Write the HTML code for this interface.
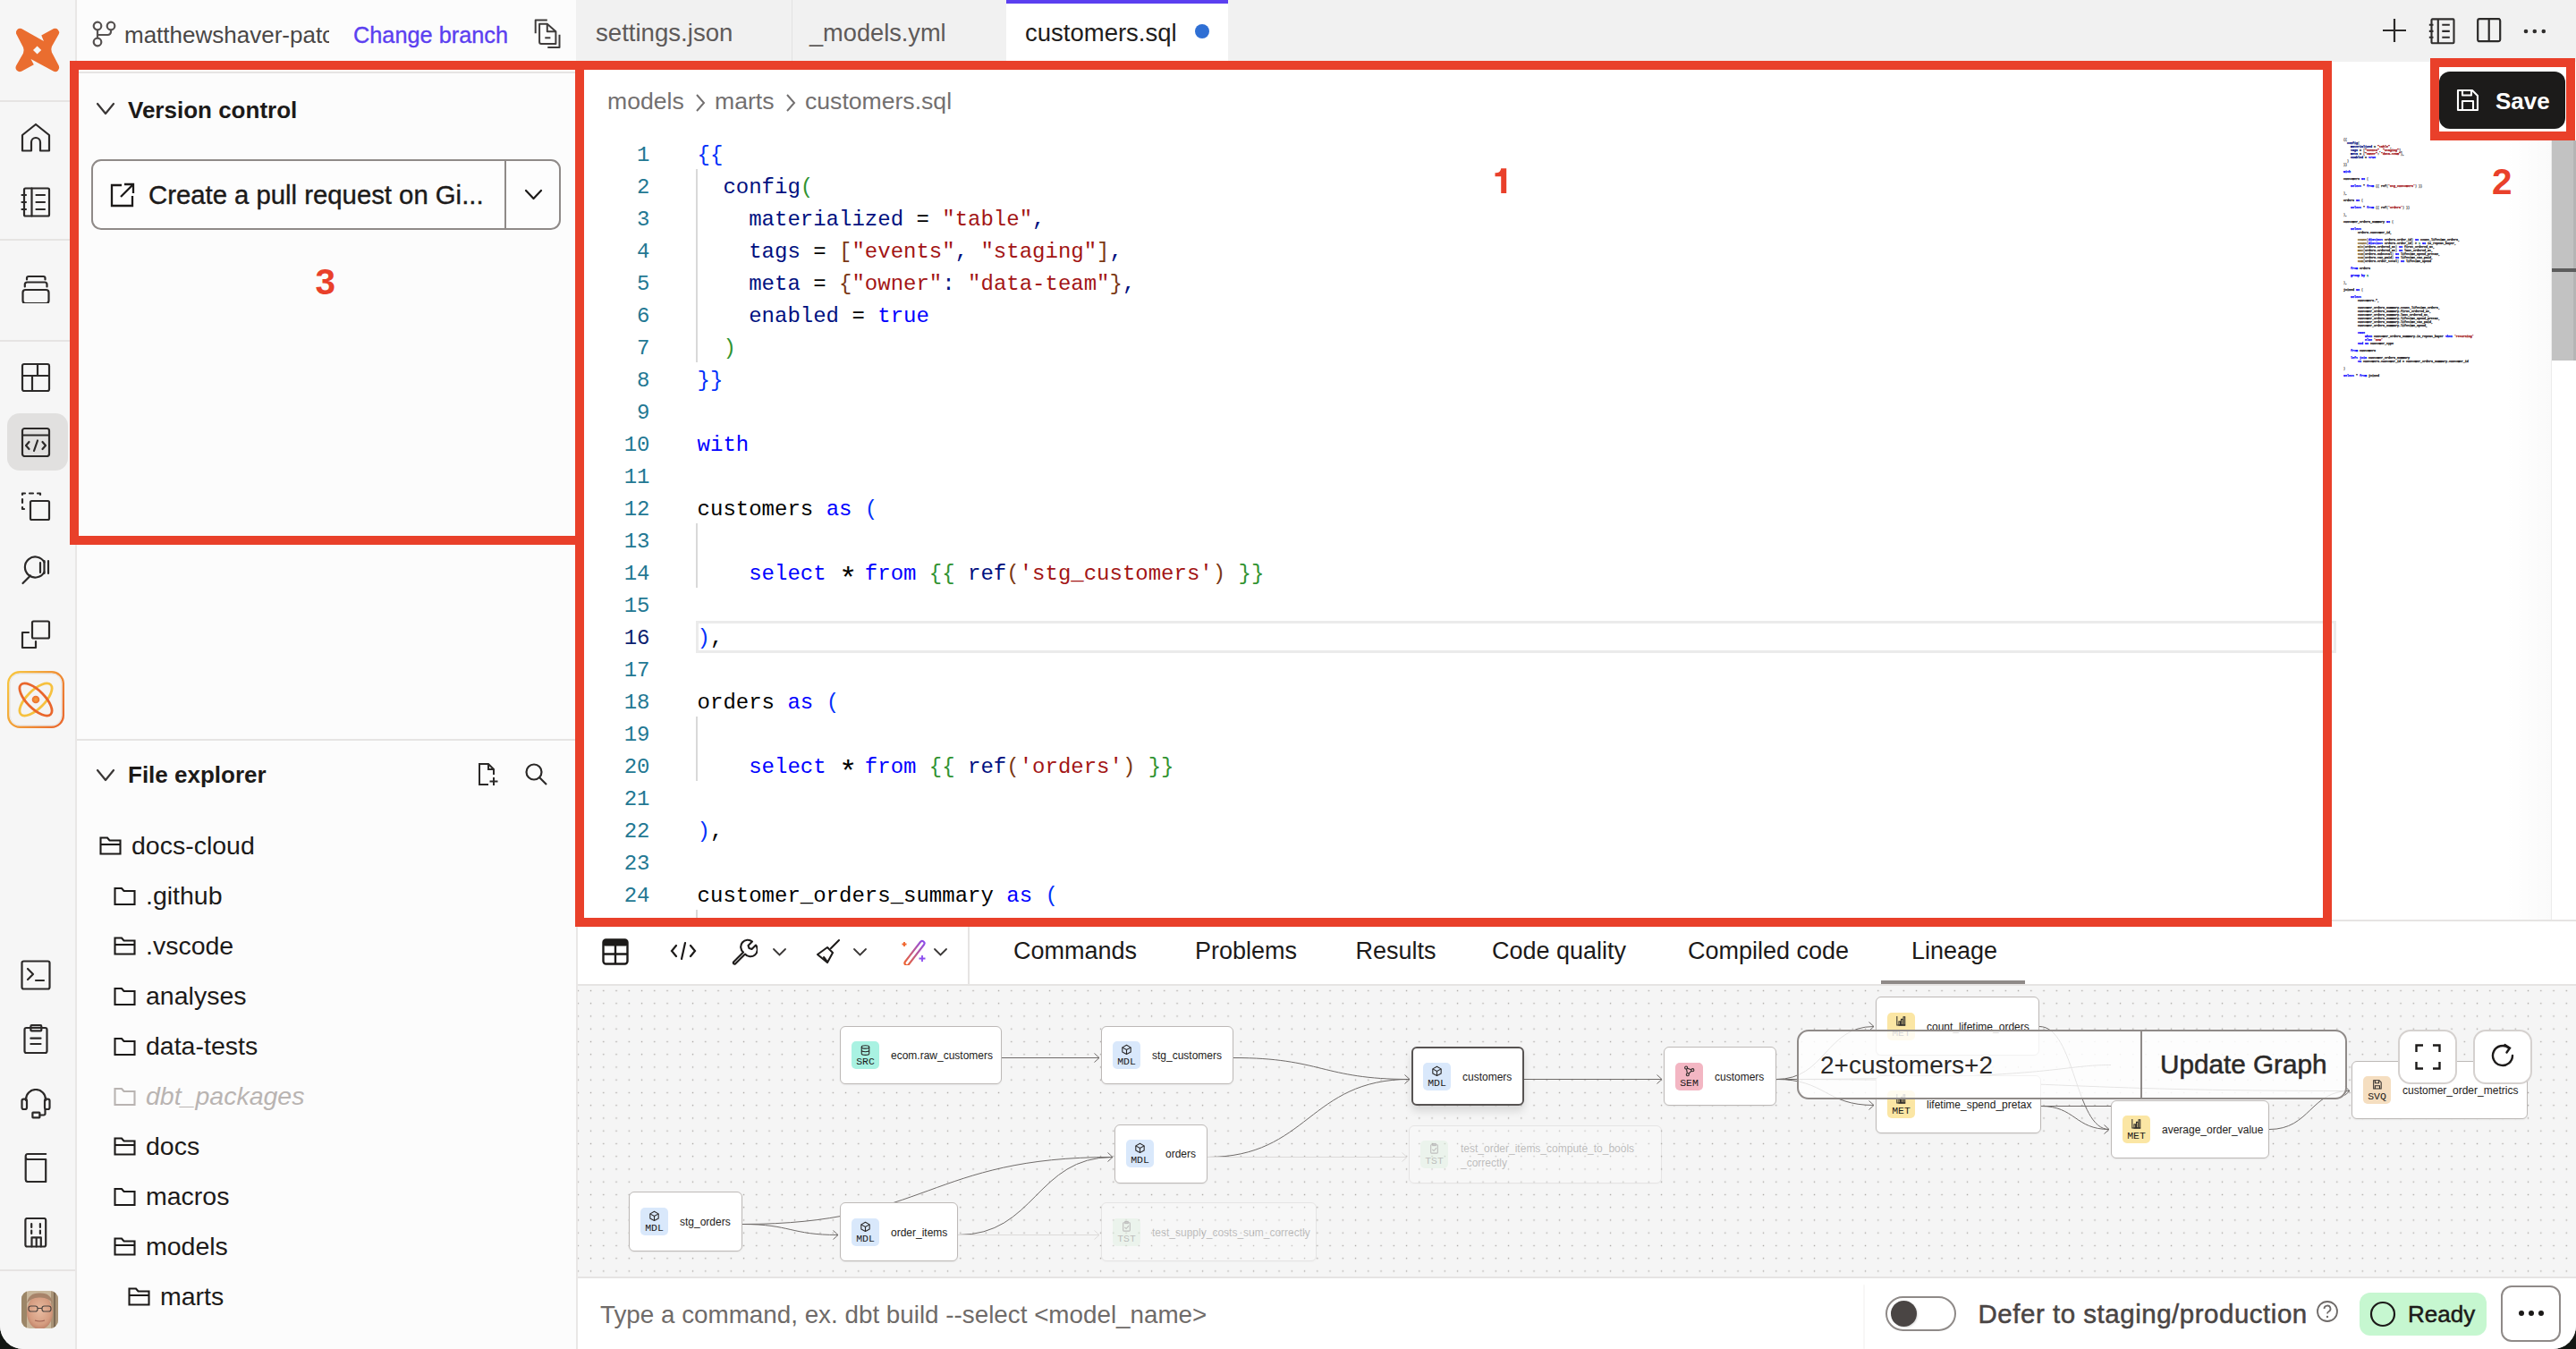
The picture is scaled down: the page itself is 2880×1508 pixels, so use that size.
<!DOCTYPE html>
<html><head><meta charset="utf-8"><title>dbt Studio</title>
<style>
html,body{margin:0;padding:0;}
body{width:2880px;height:1508px;overflow:hidden;background:#121612;font-family:'Liberation Sans', sans-serif;}
#app{position:absolute;left:0;top:0;width:2880px;height:1508px;background:#fcfcfc;border-radius:0 0 26px 26px;overflow:hidden;}
.t{position:absolute;white-space:pre;line-height:normal;}
.r{position:absolute;box-sizing:border-box;}
.ic{fill:none;stroke:#2b2928;stroke-width:2.2;stroke-linecap:round;stroke-linejoin:round;}
</style></head><body><div id="app">

<div class="r" style="left:0px;top:0px;width:85px;height:1508px;background:#f6f6f6;"></div>
<div class="r" style="left:84px;top:0px;width:2px;height:1508px;background:#e9e7e6;"></div>
<div class="r" style="left:0px;top:112px;width:84px;height:2px;background:#e6e4e3;"></div>
<div class="r" style="left:0px;top:267px;width:84px;height:2px;background:#e6e4e3;"></div>
<div class="r" style="left:0px;top:380px;width:84px;height:2px;background:#e6e4e3;"></div>
<div class="r" style="left:0px;top:1419px;width:84px;height:2px;background:#e6e4e3;"></div>
<svg class="r" style="left:0px;top:0px;" width="86" height="100" viewBox="0 0 86 100"><path fill="#ea6d2f" fill-rule="evenodd" d="M24 32 L48.9 46 L46.3 39.6 L60 32 A4.6 4.6 0 0 1 65.8 38 L57.9 52 Q56.6 55.3 57.9 58.6 L65.8 73.6 A4.6 4.6 0 0 1 60 79.8 L34.5 66 L37.8 72.3 L24 79.8 A4.6 4.6 0 0 1 18 73.6 L26 59.5 Q27.3 56.2 26 52.9 L18 37.4 A4.6 4.6 0 0 1 24 32 Z M41.6 51.4 L46.2 56 L41.6 60.6 L37 56 Z"/></svg>
<svg class="r" style="left:23px;top:137px;" width="34" height="34" viewBox="0 0 34 34"><g class="ic"><path d="M2 14 L17 2 L32 14 V31.5 H22 V22 a5 5 0 0 0 -10 0 V31.5 H2 Z"/></g></svg>
<svg class="r" style="left:23px;top:209px;" width="34" height="34" viewBox="0 0 34 34"><g class="ic"><rect x="4" y="1.5" width="28" height="31" rx="1.5"/><path d="M12.5 1.5V32.5M1.5 9H6M1.5 17H6M1.5 25H6M17.5 9H27M17.5 17H27M17.5 25H27"/></g></svg>
<svg class="r" style="left:23px;top:305px;" width="34" height="34" viewBox="0 0 34 34"><g class="ic"><rect x="2.5" y="19" width="29" height="15" rx="3"/><path d="M4.8 15.5 V13 a2.5 2.5 0 0 1 2.5-2.5 H27 a2.5 2.5 0 0 1 2.5 2.5 V15.5M7 7.5 V6 a2 2 0 0 1 2-2 H25.5 a2 2 0 0 1 2 2 V7.5"/></g></svg>
<svg class="r" style="left:23px;top:405px;" width="34" height="34" viewBox="0 0 34 34"><g class="ic"><rect x="2" y="2" width="30" height="30" rx="2"/><path d="M2 15H32M19 2V15M13 15V32"/></g></svg>
<div class="r" style="left:8px;top:462px;width:68px;height:64px;background:#e1e0df;border-radius:14px;"></div>
<svg class="r" style="left:23px;top:477px;" width="34" height="34" viewBox="0 0 34 34"><g class="ic"><rect x="2" y="2" width="30" height="31" rx="2.5"/><path d="M2 9.5H32M9.5 17L6 21L9.5 25M24.5 17L28 21L24.5 25M19 15.5L15 27"/></g></svg>
<svg class="r" style="left:23px;top:549px;" width="34" height="34" viewBox="0 0 34 34"><g class="ic"><rect x="11" y="11" width="21" height="21" rx="1.5"/><path d="M2 4 V2.5 H5M10 2.5H14M19 2.5H22 V4M2 9V13M2 18V20H4" /></g></svg>
<svg class="r" style="left:22px;top:619px;" width="38" height="38" viewBox="0 0 38 38"><g class="ic"><path d="M27.5 9.5 A11.5 11.5 0 1 0 27.5 20.5"/><path d="M12 24.5L3.5 33M23 10V21M27.5 8V22M32 8V22"/></g></svg>
<svg class="r" style="left:23px;top:693px;" width="34" height="34" viewBox="0 0 34 34"><g class="ic"><rect x="13" y="1.5" width="19" height="19" rx="1.5"/><path d="M9 14H2V31H17V24"/></g></svg>
<svg class="r" style="left:8px;top:750px;" width="64" height="64" viewBox="0 0 64 64"><defs><linearGradient id="ag" x1="0" y1="0.2" x2="1" y2="0.8"><stop offset="0" stop-color="#f7c23f"/><stop offset="1" stop-color="#ea6d2f"/></linearGradient><radialGradient id="dg"><stop offset="0" stop-color="#f7a23a"/><stop offset="1" stop-color="#ea6d2f"/></radialGradient></defs><rect x="1.2" y="1.2" width="61.6" height="61.6" rx="13" fill="#f4f4f4" stroke="url(#ag)" stroke-width="2.4"/><rect x="3.2" y="3.2" width="57.6" height="57.6" rx="11" fill="none" stroke="#e6e4e3" stroke-width="1"/><ellipse cx="32" cy="32" rx="10" ry="23.5" transform="rotate(45 32 32)" fill="none" stroke="#f6c13f" stroke-width="2.8"/><ellipse cx="32" cy="32" rx="10" ry="23.5" transform="rotate(-45 32 32)" fill="none" stroke="#e9662c" stroke-width="2.8"/><circle cx="32" cy="32" r="4.3" fill="url(#dg)"/></svg>
<svg class="r" style="left:23px;top:1073px;" width="34" height="34" viewBox="0 0 34 34"><g class="ic"><rect x="1.5" y="1.5" width="31" height="31" rx="2"/><path d="M8 10L14 16L8 22M17 23H26"/></g></svg>
<svg class="r" style="left:23px;top:1145px;" width="34" height="34" viewBox="0 0 34 34"><g class="ic"><rect x="4.5" y="4" width="25" height="28" rx="2"/><rect x="11.4" y="1.2" width="11.9" height="6.2" rx="1"/><path d="M11.4 15.7H22.5M11.4 22H22.5"/></g></svg>
<svg class="r" style="left:23px;top:1217px;" width="34" height="34" viewBox="0 0 34 34"><g class="ic"><path d="M6 13 V12 a11 11 0 0 1 22 0 V13"/><rect x="1.5" y="11.6" width="5.5" height="11.4" rx="2"/><rect x="27" y="11.6" width="5.5" height="11.4" rx="2"/><rect x="13.4" y="26.7" width="8" height="5.6" rx="0.5"/><path d="M21.4 29.5H26a1.5 1.5 0 0 0 1.5-1.5V23"/></g></svg>
<svg class="r" style="left:23px;top:1288px;" width="34" height="34" viewBox="0 0 34 34"><g class="ic"><path d="M28.2 2 H8 Q5.7 2 5.7 4.5 V30.5 Q5.7 33 8 33 H28.2 V8 H8 Q5.7 8 5.7 5.5"/></g></svg>
<svg class="r" style="left:23px;top:1361px;" width="34" height="34" viewBox="0 0 34 34"><g class="ic"><rect x="5.4" y="1" width="22.8" height="31.5" rx="2"/><path d="M12.2 7V11M21.9 7V11M12.2 14.6V18M21.9 14.6V18M12.5 32.5V22.3H22.8V32.5M17.7 22.3V32.5"/></g></svg>
<svg class="r" style="left:24px;top:1443px;" width="41" height="42" viewBox="0 0 41 42"><defs><clipPath id="avc"><rect x="0" y="0" width="41" height="42" rx="9"/></clipPath><radialGradient id="fg" cx="0.5" cy="0.45" r="0.6"><stop offset="0" stop-color="#e8bba0"/><stop offset="0.7" stop-color="#d59c80"/><stop offset="1" stop-color="#b77a62"/></radialGradient></defs><g clip-path="url(#avc)"><rect width="41" height="42" fill="#c9b79c"/><rect x="0" y="0" width="6" height="42" fill="#9c8668"/><rect x="33" y="0" width="8" height="42" fill="#a89276"/><rect x="36" y="0" width="2" height="42" fill="#7d6a55"/><ellipse cx="20.5" cy="24" rx="14.5" ry="19" fill="url(#fg)"/><path d="M6 14 Q8 2 20.5 2.5 Q33 2 35 14 Q30 7 20.5 7.5 Q11 7 6 14Z" fill="#a7836a"/><rect x="8" y="17" width="10" height="6" rx="2.5" fill="none" stroke="#4d4540" stroke-width="1.2"/><rect x="23" y="17" width="10" height="6" rx="2.5" fill="none" stroke="#4d4540" stroke-width="1.2"/><path d="M18 19.5H23" stroke="#4d4540" stroke-width="1"/><path d="M15 33 Q20.5 35 26 33" fill="none" stroke="#9c5f50" stroke-width="1.2"/></g></svg>
<div class="r" style="left:86px;top:0px;width:558px;height:69px;background:#fcfcfc;"></div>
<div class="r" style="left:644px;top:0px;width:2236px;height:69px;background:#f1f1f1;"></div>
<svg class="r" style="left:103px;top:23px;" width="28" height="30" viewBox="0 0 28 30"><g fill="none" stroke="#555150" stroke-width="2.2"><circle cx="6" cy="6" r="4.3"/><circle cx="21" cy="6" r="4.3"/><circle cx="6" cy="24" r="4.3"/><path d="M6 10.3V19.7M21 10.3V12.5a3.5 3.5 0 0 1 -3.5 3.5H6"/></g></svg>
<div class="r" style="left:139px;top:0;width:229px;height:69px;overflow:hidden;">
<div class="t " style="left:0px;top:24px;font-size:26px;color:#4a4746;font-weight:normal;font-family:'Liberation Sans', sans-serif;">matthewshaver-patch-12</div>
</div>
<div class="t " style="left:395px;top:25px;font-size:25.3px;color:#5b3ff0;font-weight:normal;font-family:'Liberation Sans', sans-serif;-webkit-text-stroke:0.35px #5b3ff0;">Change branch</div>
<svg class="r" style="left:596px;top:20px;" width="34" height="36" viewBox="0 0 34 36"><g fill="none" stroke="#3f3c3b" stroke-width="2" stroke-linejoin="round"><path d="M2.7 17.3V2.6H15.8"/><path d="M7.1 6.7H15.8L25.4 15.3V28.9H9.1a2 2 0 0 1-2-2Z"/><path d="M15.8 6.7V15.3H25.4"/><path d="M13.3 22.3H19.4"/><path d="M29.5 18.8V32.9H16.3"/></g></svg>
<div class="r" style="left:885px;top:0px;width:1px;height:69px;background:#e2e2e2;"></div>
<div class="r" style="left:1125px;top:0px;width:248px;height:69px;background:#ffffff;"></div>
<div class="r" style="left:1125px;top:0px;width:248px;height:4px;background:#5b3ff0;"></div>
<div class="t " style="left:666px;top:21px;font-size:27.6px;color:#5e5a59;font-weight:normal;font-family:'Liberation Sans', sans-serif;">settings.json</div>
<div class="t " style="left:905px;top:21px;font-size:27.2px;color:#5e5a59;font-weight:normal;font-family:'Liberation Sans', sans-serif;">_models.yml</div>
<div class="t " style="left:1146px;top:21px;font-size:27.5px;color:#1f1d1c;font-weight:normal;font-family:'Liberation Sans', sans-serif;">customers.sql</div>
<div class="r" style="left:1336px;top:27px;width:16px;height:16px;border-radius:50%;background:#2f6fd4;"></div>
<svg class="r" style="left:2663px;top:20px;" width="28" height="28" viewBox="0 0 28 28"><path d="M14 1V27M1 14H27" stroke="#2b2928" stroke-width="2.2"/></svg>
<svg class="r" style="left:2714px;top:20px;" width="32" height="30" viewBox="0 0 32 30"><g fill="none" stroke="#2f2d2c" stroke-width="2.1"><rect x="4.5" y="1.4" width="25" height="26.9" rx="1"/><path d="M11.8 1.4V28.3M1.8 7.8H6.5M1.8 14.9H6.5M1.8 21.8H6.5M16.3 7.8H24.8M16.3 14.9H24.8M16.3 21.8H24.8"/></g></svg>
<svg class="r" style="left:2769px;top:20px;" width="30" height="28" viewBox="0 0 30 28"><g fill="none" stroke="#2b2928" stroke-width="2.2"><rect x="1.2" y="1.2" width="25" height="25" rx="2"/><path d="M13.7 1.2V26.2"/></g></svg>
<svg class="r" style="left:2819px;top:30px;" width="30" height="10" viewBox="0 0 30 10"><g fill="#2f2d2c"><circle cx="5" cy="5" r="2.3"/><circle cx="14.8" cy="5" r="2.3"/><circle cx="24.8" cy="5" r="2.3"/></g></svg>
<div class="r" style="left:86px;top:69px;width:559px;height:1439px;background:#fcfcfc;"></div>
<div class="r" style="left:644px;top:69px;width:2px;height:1439px;background:#e9e7e6;"></div>
<div class="r" style="left:86px;top:80px;width:558px;height:2px;background:#e6e4e3;"></div>
<svg class="r" style="left:107px;top:114px;" width="22" height="15" viewBox="0 0 22 15"><path d="M2 2 L11.0 13 L20 2" fill="none" stroke="#3a3736" stroke-width="2.2" stroke-linecap="round" stroke-linejoin="round"/></svg>
<div class="t " style="left:143px;top:108px;font-size:26px;color:#1c1a19;font-weight:bold;font-family:'Liberation Sans', sans-serif;">Version control</div>
<div class="r" style="left:102px;top:178px;width:525px;height:79px;border:2px solid #8f8a88;border-radius:11px;background:#fdfdfd;"></div>
<div class="r" style="left:564px;top:179px;width:2px;height:77px;background:#8f8a88;"></div>
<svg class="r" style="left:122px;top:203px;" width="30" height="30" viewBox="0 0 30 30"><g fill="none" stroke="#1c1a19" stroke-width="2.3"><path d="M14 4H3V27H26V16"/><path d="M17 3H27V13M27 3L13 17"/></g></svg>
<div class="t " style="left:166px;top:201px;font-size:29.3px;color:#1c1a19;font-weight:normal;font-family:'Liberation Sans', sans-serif;-webkit-text-stroke:0.4px #1c1a19;">Create a pull request on Gi...</div>
<svg class="r" style="left:586px;top:211px;" width="21" height="13" viewBox="0 0 21 13"><path d="M2 2 L10.5 11 L19 2" fill="none" stroke="#1c1a19" stroke-width="2.2" stroke-linecap="round" stroke-linejoin="round"/></svg>
<div class="r" style="left:86px;top:826px;width:558px;height:2px;background:#e6e4e3;"></div>
<svg class="r" style="left:107px;top:859px;" width="22" height="15" viewBox="0 0 22 15"><path d="M2 2 L11.0 13 L20 2" fill="none" stroke="#3a3736" stroke-width="2.2" stroke-linecap="round" stroke-linejoin="round"/></svg>
<div class="t " style="left:143px;top:851px;font-size:26px;color:#1c1a19;font-weight:bold;font-family:'Liberation Sans', sans-serif;">File explorer</div>
<svg class="r" style="left:533px;top:852px;" width="26" height="28" viewBox="0 0 26 28"><g fill="none" stroke="#2b2928" stroke-width="2"><path d="M13 25H3V2H13L19 8V14"/><path d="M13 2V8H19"/><path d="M19 17V26M14.5 21.5H23.5"/></g></svg>
<svg class="r" style="left:586px;top:852px;" width="28" height="28" viewBox="0 0 28 28"><g fill="none" stroke="#2b2928" stroke-width="2.2"><circle cx="11" cy="11" r="8.5"/><path d="M17 17L25 25"/></g></svg>
<svg class="r" style="left:111px;top:934px;" width="25" height="23" viewBox="0 0 25 23"><g fill="none" stroke="#1c1a19" stroke-width="2.1" stroke-linejoin="miter"><path d="M1.5 2.5H9L11.5 5.5H23.5V20.5H1.5Z"/><path d="M1.5 10H23.5"/></g></svg>
<div class="t " style="left:147px;top:929px;font-size:28.5px;color:#1c1a19;font-weight:normal;font-family:'Liberation Sans', sans-serif;">docs-cloud</div>
<svg class="r" style="left:127px;top:990px;" width="25" height="23" viewBox="0 0 25 23"><g fill="none" stroke="#1c1a19" stroke-width="2.1" stroke-linejoin="miter"><path d="M1.5 3H9L11.5 6H23.5V21H1.5Z"/></g></svg>
<div class="t " style="left:163px;top:985px;font-size:28.5px;color:#1c1a19;font-weight:normal;font-family:'Liberation Sans', sans-serif;">.github</div>
<svg class="r" style="left:127px;top:1046px;" width="25" height="23" viewBox="0 0 25 23"><g fill="none" stroke="#1c1a19" stroke-width="2.1" stroke-linejoin="miter"><path d="M1.5 2.5H9L11.5 5.5H23.5V20.5H1.5Z"/><path d="M1.5 10H23.5"/></g></svg>
<div class="t " style="left:163px;top:1041px;font-size:28.5px;color:#1c1a19;font-weight:normal;font-family:'Liberation Sans', sans-serif;">.vscode</div>
<svg class="r" style="left:127px;top:1102px;" width="25" height="23" viewBox="0 0 25 23"><g fill="none" stroke="#1c1a19" stroke-width="2.1" stroke-linejoin="miter"><path d="M1.5 3H9L11.5 6H23.5V21H1.5Z"/></g></svg>
<div class="t " style="left:163px;top:1097px;font-size:28.5px;color:#1c1a19;font-weight:normal;font-family:'Liberation Sans', sans-serif;">analyses</div>
<svg class="r" style="left:127px;top:1158px;" width="25" height="23" viewBox="0 0 25 23"><g fill="none" stroke="#1c1a19" stroke-width="2.1" stroke-linejoin="miter"><path d="M1.5 3H9L11.5 6H23.5V21H1.5Z"/></g></svg>
<div class="t " style="left:163px;top:1153px;font-size:28.5px;color:#1c1a19;font-weight:normal;font-family:'Liberation Sans', sans-serif;">data-tests</div>
<svg class="r" style="left:127px;top:1214px;" width="25" height="23" viewBox="0 0 25 23"><g fill="none" stroke="#b9b4b2" stroke-width="2.1" stroke-linejoin="miter"><path d="M1.5 3H9L11.5 6H23.5V21H1.5Z"/></g></svg>
<div class="t " style="left:163px;top:1209px;font-size:28.5px;color:#b9b4b2;font-weight:normal;font-family:'Liberation Sans', sans-serif;font-style:italic;">dbt_packages</div>
<svg class="r" style="left:127px;top:1270px;" width="25" height="23" viewBox="0 0 25 23"><g fill="none" stroke="#1c1a19" stroke-width="2.1" stroke-linejoin="miter"><path d="M1.5 2.5H9L11.5 5.5H23.5V20.5H1.5Z"/><path d="M1.5 10H23.5"/></g></svg>
<div class="t " style="left:163px;top:1265px;font-size:28.5px;color:#1c1a19;font-weight:normal;font-family:'Liberation Sans', sans-serif;">docs</div>
<svg class="r" style="left:127px;top:1326px;" width="25" height="23" viewBox="0 0 25 23"><g fill="none" stroke="#1c1a19" stroke-width="2.1" stroke-linejoin="miter"><path d="M1.5 3H9L11.5 6H23.5V21H1.5Z"/></g></svg>
<div class="t " style="left:163px;top:1321px;font-size:28.5px;color:#1c1a19;font-weight:normal;font-family:'Liberation Sans', sans-serif;">macros</div>
<svg class="r" style="left:127px;top:1382px;" width="25" height="23" viewBox="0 0 25 23"><g fill="none" stroke="#1c1a19" stroke-width="2.1" stroke-linejoin="miter"><path d="M1.5 2.5H9L11.5 5.5H23.5V20.5H1.5Z"/><path d="M1.5 10H23.5"/></g></svg>
<div class="t " style="left:163px;top:1377px;font-size:28.5px;color:#1c1a19;font-weight:normal;font-family:'Liberation Sans', sans-serif;">models</div>
<svg class="r" style="left:143px;top:1438px;" width="25" height="23" viewBox="0 0 25 23"><g fill="none" stroke="#1c1a19" stroke-width="2.1" stroke-linejoin="miter"><path d="M1.5 2.5H9L11.5 5.5H23.5V20.5H1.5Z"/><path d="M1.5 10H23.5"/></g></svg>
<div class="t " style="left:179px;top:1433px;font-size:28.5px;color:#1c1a19;font-weight:normal;font-family:'Liberation Sans', sans-serif;">marts</div>
<div class="r" style="left:646px;top:69px;width:2234px;height:959px;background:#ffffff;"></div>
<div class="r" style="left:646px;top:1028px;width:2234px;height:2px;background:#e6e4e3;"></div>
<div class="t " style="left:679px;top:98px;font-size:26.6px;color:#737070;font-weight:normal;font-family:'Liberation Sans', sans-serif;">models</div>
<svg class="r" style="left:776px;top:104px;" width="14" height="22" viewBox="0 0 14 22"><path d="M3 2L11 11L3 20" fill="none" stroke="#737070" stroke-width="2"/></svg>
<div class="t " style="left:799px;top:98px;font-size:26.6px;color:#737070;font-weight:normal;font-family:'Liberation Sans', sans-serif;">marts</div>
<svg class="r" style="left:877px;top:104px;" width="14" height="22" viewBox="0 0 14 22"><path d="M3 2L11 11L3 20" fill="none" stroke="#737070" stroke-width="2"/></svg>
<div class="t " style="left:900px;top:98px;font-size:26.6px;color:#737070;font-weight:normal;font-family:'Liberation Sans', sans-serif;">customers.sql</div>
<div class="t " style="left:712.1px;top:160px;font-size:24px;color:#237893;font-weight:normal;font-family:'Liberation Mono', monospace;">1</div>
<div class="t " style="left:779.6px;top:160px;font-size:24px;color:#000;font-weight:normal;font-family:'Liberation Mono', monospace;"><span style="color:#0431fa">{{</span></div>
<div class="t " style="left:712.1px;top:196px;font-size:24px;color:#237893;font-weight:normal;font-family:'Liberation Mono', monospace;">2</div>
<div class="t " style="left:779.6px;top:196px;font-size:24px;color:#000;font-weight:normal;font-family:'Liberation Mono', monospace;"><span style="color:#001080">  config</span><span style="color:#319331">(</span></div>
<div class="t " style="left:712.1px;top:232px;font-size:24px;color:#237893;font-weight:normal;font-family:'Liberation Mono', monospace;">3</div>
<div class="t " style="left:779.6px;top:232px;font-size:24px;color:#000;font-weight:normal;font-family:'Liberation Mono', monospace;"><span style="color:#001080">    materialized</span><span style="color:#000000"> = </span><span style="color:#a31515">"table"</span><span style="color:#001080">,</span></div>
<div class="t " style="left:712.1px;top:268px;font-size:24px;color:#237893;font-weight:normal;font-family:'Liberation Mono', monospace;">4</div>
<div class="t " style="left:779.6px;top:268px;font-size:24px;color:#000;font-weight:normal;font-family:'Liberation Mono', monospace;"><span style="color:#001080">    tags</span><span style="color:#000000"> = </span><span style="color:#7b3814">[</span><span style="color:#a31515">"events"</span><span style="color:#001080">, </span><span style="color:#a31515">"staging"</span><span style="color:#7b3814">]</span><span style="color:#001080">,</span></div>
<div class="t " style="left:712.1px;top:304px;font-size:24px;color:#237893;font-weight:normal;font-family:'Liberation Mono', monospace;">5</div>
<div class="t " style="left:779.6px;top:304px;font-size:24px;color:#000;font-weight:normal;font-family:'Liberation Mono', monospace;"><span style="color:#001080">    meta</span><span style="color:#000000"> = </span><span style="color:#7b3814">{</span><span style="color:#a31515">"owner"</span><span style="color:#001080">: </span><span style="color:#a31515">"data-team"</span><span style="color:#7b3814">}</span><span style="color:#001080">,</span></div>
<div class="t " style="left:712.1px;top:340px;font-size:24px;color:#237893;font-weight:normal;font-family:'Liberation Mono', monospace;">6</div>
<div class="t " style="left:779.6px;top:340px;font-size:24px;color:#000;font-weight:normal;font-family:'Liberation Mono', monospace;"><span style="color:#001080">    enabled</span><span style="color:#000000"> = </span><span style="color:#0000ff">true</span></div>
<div class="t " style="left:712.1px;top:376px;font-size:24px;color:#237893;font-weight:normal;font-family:'Liberation Mono', monospace;">7</div>
<div class="t " style="left:779.6px;top:376px;font-size:24px;color:#000;font-weight:normal;font-family:'Liberation Mono', monospace;"><span style="color:#319331">  )</span></div>
<div class="t " style="left:712.1px;top:412px;font-size:24px;color:#237893;font-weight:normal;font-family:'Liberation Mono', monospace;">8</div>
<div class="t " style="left:779.6px;top:412px;font-size:24px;color:#000;font-weight:normal;font-family:'Liberation Mono', monospace;"><span style="color:#0431fa">}}</span></div>
<div class="t " style="left:712.1px;top:448px;font-size:24px;color:#237893;font-weight:normal;font-family:'Liberation Mono', monospace;">9</div>
<div class="t " style="left:697.7px;top:484px;font-size:24px;color:#237893;font-weight:normal;font-family:'Liberation Mono', monospace;">10</div>
<div class="t " style="left:779.6px;top:484px;font-size:24px;color:#000;font-weight:normal;font-family:'Liberation Mono', monospace;"><span style="color:#0000ff">with</span></div>
<div class="t " style="left:697.7px;top:520px;font-size:24px;color:#237893;font-weight:normal;font-family:'Liberation Mono', monospace;">11</div>
<div class="t " style="left:697.7px;top:556px;font-size:24px;color:#237893;font-weight:normal;font-family:'Liberation Mono', monospace;">12</div>
<div class="t " style="left:779.6px;top:556px;font-size:24px;color:#000;font-weight:normal;font-family:'Liberation Mono', monospace;"><span style="color:#000000">customers </span><span style="color:#0000ff">as</span><span style="color:#000000"> </span><span style="color:#0431fa">(</span></div>
<div class="t " style="left:697.7px;top:592px;font-size:24px;color:#237893;font-weight:normal;font-family:'Liberation Mono', monospace;">13</div>
<div class="t " style="left:697.7px;top:628px;font-size:24px;color:#237893;font-weight:normal;font-family:'Liberation Mono', monospace;">14</div>
<div class="t " style="left:779.6px;top:628px;font-size:24px;color:#000;font-weight:normal;font-family:'Liberation Mono', monospace;"><span style="color:#000000">    </span><span style="color:#0000ff">select</span><span style="color:#000000"> <span style="display:inline-block;width:14.4px;text-align:center;font-size:34px;line-height:10px;position:relative;top:9px">*</span> </span><span style="color:#0000ff">from</span><span style="color:#000000"> </span><span style="color:#319331">{{</span><span style="color:#000000"> </span><span style="color:#001080">ref</span><span style="color:#7b3814">(</span><span style="color:#a31515">'stg_customers'</span><span style="color:#7b3814">)</span><span style="color:#000000"> </span><span style="color:#319331">}}</span></div>
<div class="t " style="left:697.7px;top:664px;font-size:24px;color:#237893;font-weight:normal;font-family:'Liberation Mono', monospace;">15</div>
<div class="t " style="left:697.7px;top:700px;font-size:24px;color:#0b216f;font-weight:normal;font-family:'Liberation Mono', monospace;">16</div>
<div class="t " style="left:779.6px;top:700px;font-size:24px;color:#000;font-weight:normal;font-family:'Liberation Mono', monospace;"><span style="color:#0431fa">)</span><span style="color:#000000">,</span></div>
<div class="t " style="left:697.7px;top:736px;font-size:24px;color:#237893;font-weight:normal;font-family:'Liberation Mono', monospace;">17</div>
<div class="t " style="left:697.7px;top:772px;font-size:24px;color:#237893;font-weight:normal;font-family:'Liberation Mono', monospace;">18</div>
<div class="t " style="left:779.6px;top:772px;font-size:24px;color:#000;font-weight:normal;font-family:'Liberation Mono', monospace;"><span style="color:#000000">orders </span><span style="color:#0000ff">as</span><span style="color:#000000"> </span><span style="color:#0431fa">(</span></div>
<div class="t " style="left:697.7px;top:808px;font-size:24px;color:#237893;font-weight:normal;font-family:'Liberation Mono', monospace;">19</div>
<div class="t " style="left:697.7px;top:844px;font-size:24px;color:#237893;font-weight:normal;font-family:'Liberation Mono', monospace;">20</div>
<div class="t " style="left:779.6px;top:844px;font-size:24px;color:#000;font-weight:normal;font-family:'Liberation Mono', monospace;"><span style="color:#000000">    </span><span style="color:#0000ff">select</span><span style="color:#000000"> <span style="display:inline-block;width:14.4px;text-align:center;font-size:34px;line-height:10px;position:relative;top:9px">*</span> </span><span style="color:#0000ff">from</span><span style="color:#000000"> </span><span style="color:#319331">{{</span><span style="color:#000000"> </span><span style="color:#001080">ref</span><span style="color:#7b3814">(</span><span style="color:#a31515">'orders'</span><span style="color:#7b3814">)</span><span style="color:#000000"> </span><span style="color:#319331">}}</span></div>
<div class="t " style="left:697.7px;top:880px;font-size:24px;color:#237893;font-weight:normal;font-family:'Liberation Mono', monospace;">21</div>
<div class="t " style="left:697.7px;top:916px;font-size:24px;color:#237893;font-weight:normal;font-family:'Liberation Mono', monospace;">22</div>
<div class="t " style="left:779.6px;top:916px;font-size:24px;color:#000;font-weight:normal;font-family:'Liberation Mono', monospace;"><span style="color:#0431fa">)</span><span style="color:#000000">,</span></div>
<div class="t " style="left:697.7px;top:952px;font-size:24px;color:#237893;font-weight:normal;font-family:'Liberation Mono', monospace;">23</div>
<div class="t " style="left:697.7px;top:988px;font-size:24px;color:#237893;font-weight:normal;font-family:'Liberation Mono', monospace;">24</div>
<div class="t " style="left:779.6px;top:988px;font-size:24px;color:#000;font-weight:normal;font-family:'Liberation Mono', monospace;"><span style="color:#000000">customer_orders_summary </span><span style="color:#0000ff">as</span><span style="color:#000000"> </span><span style="color:#0431fa">(</span></div>
<div class="r" style="left:778px;top:694px;width:1834px;height:36px;border:3px solid #ebebeb;"></div>
<div class="r" style="left:778px;top:189px;width:2px;height:216px;background:#d9d9d9;"></div>
<div class="r" style="left:778px;top:585px;width:2px;height:72px;background:#d9d9d9;"></div>
<div class="r" style="left:778px;top:801px;width:2px;height:72px;background:#d9d9d9;"></div>
<div class="r" style="left:778px;top:1017px;width:2px;height:36px;background:#d9d9d9;"></div>
<div class="r" style="left:2620px;top:154px;font-family:'Liberation Mono', monospace;font-size:3.34px;line-height:4px;white-space:pre;font-weight:bold;-webkit-text-stroke:0.25px currentColor"><span style="color:#6a6a6a">{</span><span style="color:#6a6a6a">{</span><br><span style="color:#1a1a1a">  </span><span style="color:#001080">config</span><span style="color:#6a6a6a">(</span><br><span style="color:#1a1a1a">    </span><span style="color:#001080">materialized</span><span style="color:#1a1a1a"> </span><span style="color:#1a1a1a">=</span><span style="color:#1a1a1a"> </span><span style="color:#a31515">"table"</span><span style="color:#1a1a1a">,</span><br><span style="color:#1a1a1a">    </span><span style="color:#001080">tags</span><span style="color:#1a1a1a"> </span><span style="color:#1a1a1a">=</span><span style="color:#1a1a1a"> </span><span style="color:#6a6a6a">[</span><span style="color:#a31515">"events"</span><span style="color:#1a1a1a">,</span><span style="color:#1a1a1a"> </span><span style="color:#a31515">"staging"</span><span style="color:#6a6a6a">]</span><span style="color:#1a1a1a">,</span><br><span style="color:#1a1a1a">    </span><span style="color:#001080">meta</span><span style="color:#1a1a1a"> </span><span style="color:#1a1a1a">=</span><span style="color:#1a1a1a"> </span><span style="color:#6a6a6a">{</span><span style="color:#a31515">"owner"</span><span style="color:#1a1a1a">:</span><span style="color:#1a1a1a"> </span><span style="color:#a31515">"data-team"</span><span style="color:#6a6a6a">}</span><span style="color:#1a1a1a">,</span><br><span style="color:#1a1a1a">    </span><span style="color:#001080">enabled</span><span style="color:#1a1a1a"> </span><span style="color:#1a1a1a">=</span><span style="color:#1a1a1a"> </span><span style="color:#0000ff">true</span><br><span style="color:#1a1a1a">  </span><span style="color:#6a6a6a">)</span><br><span style="color:#6a6a6a">}</span><span style="color:#6a6a6a">}</span><br><br><span style="color:#0000ff">with</span><br><br><span style="color:#1a1a1a">customers</span><span style="color:#1a1a1a"> </span><span style="color:#0000ff">as</span><span style="color:#1a1a1a"> </span><span style="color:#6a6a6a">(</span><br><br><span style="color:#1a1a1a">    </span><span style="color:#0000ff">select</span><span style="color:#1a1a1a"> </span><span style="color:#1a1a1a">*</span><span style="color:#1a1a1a"> </span><span style="color:#0000ff">from</span><span style="color:#1a1a1a"> </span><span style="color:#6a6a6a">{</span><span style="color:#6a6a6a">{</span><span style="color:#1a1a1a"> </span><span style="color:#1a1a1a">ref</span><span style="color:#6a6a6a">(</span><span style="color:#a31515">'stg_customers'</span><span style="color:#6a6a6a">)</span><span style="color:#1a1a1a"> </span><span style="color:#6a6a6a">}</span><span style="color:#6a6a6a">}</span><br><br><span style="color:#6a6a6a">)</span><span style="color:#1a1a1a">,</span><br><br><span style="color:#1a1a1a">orders</span><span style="color:#1a1a1a"> </span><span style="color:#0000ff">as</span><span style="color:#1a1a1a"> </span><span style="color:#6a6a6a">(</span><br><br><span style="color:#1a1a1a">    </span><span style="color:#0000ff">select</span><span style="color:#1a1a1a"> </span><span style="color:#1a1a1a">*</span><span style="color:#1a1a1a"> </span><span style="color:#0000ff">from</span><span style="color:#1a1a1a"> </span><span style="color:#6a6a6a">{</span><span style="color:#6a6a6a">{</span><span style="color:#1a1a1a"> </span><span style="color:#1a1a1a">ref</span><span style="color:#6a6a6a">(</span><span style="color:#a31515">'orders'</span><span style="color:#6a6a6a">)</span><span style="color:#1a1a1a"> </span><span style="color:#6a6a6a">}</span><span style="color:#6a6a6a">}</span><br><br><span style="color:#6a6a6a">)</span><span style="color:#1a1a1a">,</span><br><br><span style="color:#1a1a1a">customer_orders_summary</span><span style="color:#1a1a1a"> </span><span style="color:#0000ff">as</span><span style="color:#1a1a1a"> </span><span style="color:#6a6a6a">(</span><br><br><span style="color:#1a1a1a">    </span><span style="color:#0000ff">select</span><br><span style="color:#1a1a1a">        </span><span style="color:#1a1a1a">orders</span><span style="color:#1a1a1a">.</span><span style="color:#1a1a1a">customer_id</span><span style="color:#1a1a1a">,</span><br><br><span style="color:#1a1a1a">        </span><span style="color:#795e26">count</span><span style="color:#6a6a6a">(</span><span style="color:#0000ff">distinct</span><span style="color:#1a1a1a"> </span><span style="color:#1a1a1a">orders</span><span style="color:#1a1a1a">.</span><span style="color:#1a1a1a">order_id</span><span style="color:#6a6a6a">)</span><span style="color:#1a1a1a"> </span><span style="color:#0000ff">as</span><span style="color:#1a1a1a"> </span><span style="color:#1a1a1a">count_lifetime_orders</span><span style="color:#1a1a1a">,</span><br><span style="color:#1a1a1a">        </span><span style="color:#795e26">count</span><span style="color:#6a6a6a">(</span><span style="color:#0000ff">distinct</span><span style="color:#1a1a1a"> </span><span style="color:#1a1a1a">orders</span><span style="color:#1a1a1a">.</span><span style="color:#1a1a1a">order_id</span><span style="color:#6a6a6a">)</span><span style="color:#1a1a1a"> </span><span style="color:#1a1a1a">&gt;</span><span style="color:#1a1a1a"> </span><span style="color:#098658">1</span><span style="color:#1a1a1a"> </span><span style="color:#0000ff">as</span><span style="color:#1a1a1a"> </span><span style="color:#1a1a1a">is_repeat_buyer</span><span style="color:#1a1a1a">,</span><br><span style="color:#1a1a1a">        </span><span style="color:#795e26">min</span><span style="color:#6a6a6a">(</span><span style="color:#1a1a1a">orders</span><span style="color:#1a1a1a">.</span><span style="color:#1a1a1a">ordered_at</span><span style="color:#6a6a6a">)</span><span style="color:#1a1a1a"> </span><span style="color:#0000ff">as</span><span style="color:#1a1a1a"> </span><span style="color:#1a1a1a">first_ordered_at</span><span style="color:#1a1a1a">,</span><br><span style="color:#1a1a1a">        </span><span style="color:#795e26">max</span><span style="color:#6a6a6a">(</span><span style="color:#1a1a1a">orders</span><span style="color:#1a1a1a">.</span><span style="color:#1a1a1a">ordered_at</span><span style="color:#6a6a6a">)</span><span style="color:#1a1a1a"> </span><span style="color:#0000ff">as</span><span style="color:#1a1a1a"> </span><span style="color:#1a1a1a">last_ordered_at</span><span style="color:#1a1a1a">,</span><br><span style="color:#1a1a1a">        </span><span style="color:#795e26">sum</span><span style="color:#6a6a6a">(</span><span style="color:#1a1a1a">orders</span><span style="color:#1a1a1a">.</span><span style="color:#1a1a1a">subtotal</span><span style="color:#6a6a6a">)</span><span style="color:#1a1a1a"> </span><span style="color:#0000ff">as</span><span style="color:#1a1a1a"> </span><span style="color:#1a1a1a">lifetime_spend_pretax</span><span style="color:#1a1a1a">,</span><br><span style="color:#1a1a1a">        </span><span style="color:#795e26">sum</span><span style="color:#6a6a6a">(</span><span style="color:#1a1a1a">orders</span><span style="color:#1a1a1a">.</span><span style="color:#1a1a1a">tax_paid</span><span style="color:#6a6a6a">)</span><span style="color:#1a1a1a"> </span><span style="color:#0000ff">as</span><span style="color:#1a1a1a"> </span><span style="color:#1a1a1a">lifetime_tax_paid</span><span style="color:#1a1a1a">,</span><br><span style="color:#1a1a1a">        </span><span style="color:#795e26">sum</span><span style="color:#6a6a6a">(</span><span style="color:#1a1a1a">orders</span><span style="color:#1a1a1a">.</span><span style="color:#1a1a1a">order_total</span><span style="color:#6a6a6a">)</span><span style="color:#1a1a1a"> </span><span style="color:#0000ff">as</span><span style="color:#1a1a1a"> </span><span style="color:#1a1a1a">lifetime_spend</span><br><br><span style="color:#1a1a1a">    </span><span style="color:#0000ff">from</span><span style="color:#1a1a1a"> </span><span style="color:#1a1a1a">orders</span><br><br><span style="color:#1a1a1a">    </span><span style="color:#0000ff">group</span><span style="color:#1a1a1a"> </span><span style="color:#0000ff">by</span><span style="color:#1a1a1a"> </span><span style="color:#098658">1</span><br><br><span style="color:#6a6a6a">)</span><span style="color:#1a1a1a">,</span><br><br><span style="color:#1a1a1a">joined</span><span style="color:#1a1a1a"> </span><span style="color:#0000ff">as</span><span style="color:#1a1a1a"> </span><span style="color:#6a6a6a">(</span><br><br><span style="color:#1a1a1a">    </span><span style="color:#0000ff">select</span><br><span style="color:#1a1a1a">        </span><span style="color:#1a1a1a">customers</span><span style="color:#1a1a1a">.</span><span style="color:#1a1a1a">*</span><span style="color:#1a1a1a">,</span><br><br><span style="color:#1a1a1a">        </span><span style="color:#1a1a1a">customer_orders_summary</span><span style="color:#1a1a1a">.</span><span style="color:#1a1a1a">count_lifetime_orders</span><span style="color:#1a1a1a">,</span><br><span style="color:#1a1a1a">        </span><span style="color:#1a1a1a">customer_orders_summary</span><span style="color:#1a1a1a">.</span><span style="color:#1a1a1a">first_ordered_at</span><span style="color:#1a1a1a">,</span><br><span style="color:#1a1a1a">        </span><span style="color:#1a1a1a">customer_orders_summary</span><span style="color:#1a1a1a">.</span><span style="color:#1a1a1a">last_ordered_at</span><span style="color:#1a1a1a">,</span><br><span style="color:#1a1a1a">        </span><span style="color:#1a1a1a">customer_orders_summary</span><span style="color:#1a1a1a">.</span><span style="color:#1a1a1a">lifetime_spend_pretax</span><span style="color:#1a1a1a">,</span><br><span style="color:#1a1a1a">        </span><span style="color:#1a1a1a">customer_orders_summary</span><span style="color:#1a1a1a">.</span><span style="color:#1a1a1a">lifetime_tax_paid</span><span style="color:#1a1a1a">,</span><br><span style="color:#1a1a1a">        </span><span style="color:#1a1a1a">customer_orders_summary</span><span style="color:#1a1a1a">.</span><span style="color:#1a1a1a">lifetime_spend</span><span style="color:#1a1a1a">,</span><br><br><span style="color:#1a1a1a">        </span><span style="color:#0000ff">case</span><br><span style="color:#1a1a1a">            </span><span style="color:#0000ff">when</span><span style="color:#1a1a1a"> </span><span style="color:#1a1a1a">customer_orders_summary</span><span style="color:#1a1a1a">.</span><span style="color:#1a1a1a">is_repeat_buyer</span><span style="color:#1a1a1a"> </span><span style="color:#0000ff">then</span><span style="color:#1a1a1a"> </span><span style="color:#a31515">'returning'</span><br><span style="color:#1a1a1a">            </span><span style="color:#0000ff">else</span><span style="color:#1a1a1a"> </span><span style="color:#a31515">'new'</span><br><span style="color:#1a1a1a">        </span><span style="color:#0000ff">end</span><span style="color:#1a1a1a"> </span><span style="color:#0000ff">as</span><span style="color:#1a1a1a"> </span><span style="color:#1a1a1a">customer_type</span><br><br><span style="color:#1a1a1a">    </span><span style="color:#0000ff">from</span><span style="color:#1a1a1a"> </span><span style="color:#1a1a1a">customers</span><br><br><span style="color:#1a1a1a">    </span><span style="color:#0000ff">left</span><span style="color:#1a1a1a"> </span><span style="color:#0000ff">join</span><span style="color:#1a1a1a"> </span><span style="color:#1a1a1a">customer_orders_summary</span><br><span style="color:#1a1a1a">        </span><span style="color:#0000ff">on</span><span style="color:#1a1a1a"> </span><span style="color:#1a1a1a">customers</span><span style="color:#1a1a1a">.</span><span style="color:#1a1a1a">customer_id</span><span style="color:#1a1a1a"> </span><span style="color:#1a1a1a">=</span><span style="color:#1a1a1a"> </span><span style="color:#1a1a1a">customer_orders_summary</span><span style="color:#1a1a1a">.</span><span style="color:#1a1a1a">customer_id</span><br><br><span style="color:#6a6a6a">)</span><br><br><span style="color:#0000ff">select</span><span style="color:#1a1a1a"> </span><span style="color:#1a1a1a">*</span><span style="color:#1a1a1a"> </span><span style="color:#0000ff">from</span><span style="color:#1a1a1a"> </span><span style="color:#1a1a1a">joined</span></div>
<div class="r" style="left:2800px;top:157px;width:52px;height:871px;background:linear-gradient(90deg,rgba(0,0,0,0) 0%,rgba(0,0,0,0.02) 100%);"></div>
<div class="r" style="left:2852px;top:157px;width:1px;height:871px;background:#ececec;"></div>
<div class="r" style="left:2853px;top:157px;width:27px;height:246px;background:#c2c2c2;"></div>
<div class="r" style="left:2877px;top:157px;width:3px;height:246px;background:#b5b5b5;"></div>
<div class="r" style="left:2853px;top:300px;width:27px;height:4px;background:#5c5c5c;"></div>
<div class="r" style="left:646px;top:1030px;width:2234px;height:478px;background:#ffffff;"></div>
<div class="r" style="left:646px;top:1100px;width:2234px;height:2px;background:#e6e4e3;"></div>
<div class="r" style="left:1082px;top:1036px;width:2px;height:64px;background:#e6e4e3;"></div>
<svg class="r" style="left:673px;top:1049px;" width="30" height="30" viewBox="0 0 30 30"><rect x="1.5" y="1.5" width="27" height="27" rx="3" fill="none" stroke="#1c1a19" stroke-width="2.4"/><rect x="1.5" y="1.5" width="27" height="7" rx="2" fill="#1c1a19"/><path d="M1.5 17.5H28.5M15 8V28.5" stroke="#1c1a19" stroke-width="2.4"/></svg>
<svg class="r" style="left:749px;top:1051px;" width="30" height="24" viewBox="0 0 30 24"><g fill="none" stroke="#1c1a19" stroke-width="2.2" stroke-linecap="round"><path d="M7 6L2 12L7 18M23 6L28 12L23 18M17 3L13 21"/></g></svg>
<svg class="r" style="left:817px;top:1049px;" width="30" height="30" viewBox="0 0 30 30"><path d="M3 26.5 L14 15.5 a7.5 7.5 0 0 1 10 -12 l-4.5 4.5 l1 3 l3 1 l4.5 -4.5 a7.5 7.5 0 0 1 -12 10 L5 28.5 a1.5 1.5 0 0 1 -2 -2Z" fill="none" stroke="#1c1a19" stroke-width="2.1" stroke-linejoin="round"/></svg>
<svg class="r" style="left:862px;top:1058px;" width="19" height="12" viewBox="0 0 19 12"><path d="M3 3L9.5 9.5L16 3" fill="none" stroke="#3a3736" stroke-width="1.8" stroke-linecap="round"/></svg>
<svg class="r" style="left:912px;top:1049px;" width="28" height="30" viewBox="0 0 28 30"><g fill="none" stroke="#1c1a19" stroke-width="2.1" stroke-linejoin="round" stroke-linecap="round"><path d="M26 2L17 11M13 10L19 16L13 27L2 18Z"/><path d="M9 21L12 25"/></g></svg>
<svg class="r" style="left:952px;top:1058px;" width="19" height="12" viewBox="0 0 19 12"><path d="M3 3L9.5 9.5L16 3" fill="none" stroke="#3a3736" stroke-width="1.8" stroke-linecap="round"/></svg>
<svg class="r" style="left:1007px;top:1049px;" width="30" height="30" viewBox="0 0 30 30"><defs><linearGradient id="wg" x1="0" y1="1" x2="1" y2="0"><stop offset="0" stop-color="#f0642c"/><stop offset="1" stop-color="#8b4cf0"/></linearGradient></defs><path d="M5 26 L22 4 a2.5 2.5 0 0 1 4 3 L9 29 a2.5 2.5 0 0 1 -4 -3Z" fill="none" stroke="url(#wg)" stroke-width="2.1"/><path d="M4 4V9M1.5 6.5H6.5" stroke="#f0642c" stroke-width="1.8"/><path d="M24 19V26M20.5 22.5H27.5" stroke="#8b4cf0" stroke-width="1.8"/></svg>
<svg class="r" style="left:1042px;top:1058px;" width="19" height="12" viewBox="0 0 19 12"><path d="M3 3L9.5 9.5L16 3" fill="none" stroke="#3a3736" stroke-width="1.8" stroke-linecap="round"/></svg>
<div class="t " style="left:1133px;top:1047.5px;font-size:27px;color:#1c1a19;font-weight:normal;font-family:'Liberation Sans', sans-serif;">Commands</div>
<div class="t " style="left:1336px;top:1047.5px;font-size:27px;color:#1c1a19;font-weight:normal;font-family:'Liberation Sans', sans-serif;">Problems</div>
<div class="t " style="left:1515.6px;top:1047.5px;font-size:27px;color:#1c1a19;font-weight:normal;font-family:'Liberation Sans', sans-serif;">Results</div>
<div class="t " style="left:1668px;top:1047.5px;font-size:27px;color:#1c1a19;font-weight:normal;font-family:'Liberation Sans', sans-serif;">Code quality</div>
<div class="t " style="left:1887px;top:1047.5px;font-size:27px;color:#1c1a19;font-weight:normal;font-family:'Liberation Sans', sans-serif;">Compiled code</div>
<div class="t " style="left:2137px;top:1047.5px;font-size:27px;color:#1c1a19;font-weight:normal;font-family:'Liberation Sans', sans-serif;">Lineage</div>
<div class="r" style="left:2103px;top:1096px;width:161px;height:4px;background:#8f8a88;"></div>
<svg class="r" style="left:646px;top:1102px" width="2234" height="326"><defs><pattern id="dots" patternUnits="userSpaceOnUse" width="14.25" height="14.25" x="7.4" y="-1.7"><rect x="6.45" y="6.45" width="1.4" height="1.4" fill="#aaa6a4"/></pattern></defs><rect width="2234" height="326" fill="#f5f5f5"/><rect width="2234" height="326" fill="url(#dots)"/></svg>
<div class="r" style="left:646px;top:1427px;width:2234px;height:2px;background:#e6e4e3;"></div>
<svg class="r" style="left:646px;top:1102px" width="2234" height="326" viewBox="646 1102 2234 326"><g fill="none" stroke="#6f6b69" stroke-width="1.0" transform="translate(0 0.5)"><path d="M1120 1182 H1229"/><path d="M1379 1182 C1478 1182 1478 1206 1576 1206"/><path d="M1350 1293 C1463 1293 1463 1206 1576 1206"/><path d="M830 1368 C884 1368 884 1380 937 1380"/><path d="M830 1368 C1038 1368 1038 1293 1244 1293"/><path d="M1071 1380 C1158 1380 1158 1293 1244 1293"/><path d="M1704 1206 H1858"/><path d="M1986 1206 C2041 1206 2041 1147 2095 1147"/><path d="M1986 1206 C2041 1206 2041 1235 2095 1235"/><path d="M2280 1147 C2320 1147 2320 1262 2358 1262"/><path d="M2282 1236 C2320 1236 2320 1262 2358 1262"/><path d="M2282 1236 H2360"/><path d="M2537 1262 C2583 1262 2583 1219 2627 1219"/><path d="M1986 1206 C2300 1206 2300 1219 2627 1219"/><path d="M1986 1206 C2300 1206 2300 1190 2360 1190"/><path d="M1223.5 1177 L1229 1182 L1223.5 1187"/><path d="M1570.5 1201 L1576 1206 L1570.5 1211"/><path d="M931.5 1375 L937 1380 L931.5 1385"/><path d="M1238.5 1288 L1244 1293 L1238.5 1298"/><path d="M1852.5 1201 L1858 1206 L1852.5 1211"/><path d="M2089.5 1142 L2095 1147 L2089.5 1152"/><path d="M2089.5 1230 L2095 1235 L2089.5 1240"/><path d="M2352.5 1257 L2358 1262 L2352.5 1267"/><path d="M2621.5 1214 L2627 1219 L2621.5 1224"/></g><g fill="none" stroke="#dcdad9" stroke-width="1.0" transform="translate(0 0.5)"><path d="M1071 1380 H1229"/><path d="M1350 1293 H1573"/><path d="M1223.5 1375 L1229 1380 L1223.5 1385"/><path d="M1567.5 1288 L1573 1293 L1567.5 1298"/></g></svg>
<div class="r" style="left:939px;top:1147px;width:181px;height:65px;background:#fff;border:1.5px solid #bdb9b7;border-radius:6px;box-shadow:0 1px 2px rgba(0,0,0,0.06);"></div>
<div class="r" style="left:952px;top:1164px;width:31px;height:31px;background:#a9f2e2;border-radius:5px;"><svg style="position:absolute;left:0;top:0" width="31" height="31"><g transform="translate(15.5 9) scale(0.85) translate(-15.5 -9)"><g fill="none" stroke="#2b2928" stroke-width="1.3"><ellipse cx="15.5" cy="6" rx="5" ry="2"/><path d="M10.5 6V14.5a5 2 0 0 0 10 0V6M10.5 10.2a5 2 0 0 0 10 0"/></g></g></svg><div class="t" style="left:0;top:16px;width:31px;text-align:center;font-family:'Liberation Mono', monospace;font-size:11.5px;color:#1c1a19">SRC</div></div>
<div class="t " style="left:996px;top:1173px;font-size:12px;color:#1c1a19;font-weight:normal;font-family:'Liberation Sans', sans-serif;">ecom.raw_customers</div>
<div class="r" style="left:1231px;top:1147px;width:148px;height:65px;background:#fff;border:1.5px solid #bdb9b7;border-radius:6px;box-shadow:0 1px 2px rgba(0,0,0,0.06);"></div>
<div class="r" style="left:1244px;top:1164px;width:31px;height:31px;background:#d9e8fb;border-radius:5px;"><svg style="position:absolute;left:0;top:0" width="31" height="31"><g transform="translate(15.5 9) scale(0.85) translate(-15.5 -9)"><g fill="none" stroke="#2b2928" stroke-width="1.3" stroke-linejoin="round"><path d="M15.5 3.5L21 6.5V12.5L15.5 15.5L10 12.5V6.5Z"/><path d="M10 6.5L15.5 9.5L21 6.5M15.5 9.5V15.5"/></g></g></svg><div class="t" style="left:0;top:16px;width:31px;text-align:center;font-family:'Liberation Mono', monospace;font-size:11.5px;color:#1c1a19">MDL</div></div>
<div class="t " style="left:1288px;top:1173px;font-size:12px;color:#1c1a19;font-weight:normal;font-family:'Liberation Sans', sans-serif;">stg_customers</div>
<div class="r" style="left:1246px;top:1257px;width:104px;height:66px;background:#fff;border:1.5px solid #bdb9b7;border-radius:6px;box-shadow:0 1px 2px rgba(0,0,0,0.06);"></div>
<div class="r" style="left:1259px;top:1274px;width:31px;height:31px;background:#d9e8fb;border-radius:5px;"><svg style="position:absolute;left:0;top:0" width="31" height="31"><g transform="translate(15.5 9) scale(0.85) translate(-15.5 -9)"><g fill="none" stroke="#2b2928" stroke-width="1.3" stroke-linejoin="round"><path d="M15.5 3.5L21 6.5V12.5L15.5 15.5L10 12.5V6.5Z"/><path d="M10 6.5L15.5 9.5L21 6.5M15.5 9.5V15.5"/></g></g></svg><div class="t" style="left:0;top:16px;width:31px;text-align:center;font-family:'Liberation Mono', monospace;font-size:11.5px;color:#1c1a19">MDL</div></div>
<div class="t " style="left:1303px;top:1283px;font-size:12px;color:#1c1a19;font-weight:normal;font-family:'Liberation Sans', sans-serif;">orders</div>
<div class="r" style="left:703px;top:1332px;width:127px;height:67px;background:#fff;border:1.5px solid #bdb9b7;border-radius:6px;box-shadow:0 1px 2px rgba(0,0,0,0.06);"></div>
<div class="r" style="left:716px;top:1350px;width:31px;height:31px;background:#d9e8fb;border-radius:5px;"><svg style="position:absolute;left:0;top:0" width="31" height="31"><g transform="translate(15.5 9) scale(0.85) translate(-15.5 -9)"><g fill="none" stroke="#2b2928" stroke-width="1.3" stroke-linejoin="round"><path d="M15.5 3.5L21 6.5V12.5L15.5 15.5L10 12.5V6.5Z"/><path d="M10 6.5L15.5 9.5L21 6.5M15.5 9.5V15.5"/></g></g></svg><div class="t" style="left:0;top:16px;width:31px;text-align:center;font-family:'Liberation Mono', monospace;font-size:11.5px;color:#1c1a19">MDL</div></div>
<div class="t " style="left:760px;top:1359px;font-size:12px;color:#1c1a19;font-weight:normal;font-family:'Liberation Sans', sans-serif;">stg_orders</div>
<div class="r" style="left:939px;top:1344px;width:132px;height:66px;background:#fff;border:1.5px solid #bdb9b7;border-radius:6px;box-shadow:0 1px 2px rgba(0,0,0,0.06);"></div>
<div class="r" style="left:952px;top:1362px;width:31px;height:31px;background:#d9e8fb;border-radius:5px;"><svg style="position:absolute;left:0;top:0" width="31" height="31"><g transform="translate(15.5 9) scale(0.85) translate(-15.5 -9)"><g fill="none" stroke="#2b2928" stroke-width="1.3" stroke-linejoin="round"><path d="M15.5 3.5L21 6.5V12.5L15.5 15.5L10 12.5V6.5Z"/><path d="M10 6.5L15.5 9.5L21 6.5M15.5 9.5V15.5"/></g></g></svg><div class="t" style="left:0;top:16px;width:31px;text-align:center;font-family:'Liberation Mono', monospace;font-size:11.5px;color:#1c1a19">MDL</div></div>
<div class="t " style="left:996px;top:1371px;font-size:12px;color:#1c1a19;font-weight:normal;font-family:'Liberation Sans', sans-serif;">order_items</div>
<div class="r" style="left:1231px;top:1344px;width:241px;height:66px;background:#fff;border:1.5px solid #bdb9b7;border-radius:6px;box-shadow:0 1px 2px rgba(0,0,0,0.06);opacity:0.27;"></div>
<div class="r" style="left:1244px;top:1362px;width:31px;height:31px;background:#cdeccf;border-radius:5px;opacity:0.27;"><svg style="position:absolute;left:0;top:0" width="31" height="31"><g transform="translate(15.5 9) scale(0.85) translate(-15.5 -9)"><g fill="none" stroke="#2b2928" stroke-width="1.3"><rect x="11" y="4" width="9" height="11" rx="1"/><rect x="13.5" y="2.5" width="4" height="2.5"/><path d="M13 10L15 12L18.5 8"/></g></g></svg><div class="t" style="left:0;top:16px;width:31px;text-align:center;font-family:'Liberation Mono', monospace;font-size:11.5px;color:#1c1a19">TST</div></div>
<div class="t " style="left:1288px;top:1371px;font-size:12px;color:#1c1a19;font-weight:normal;font-family:'Liberation Sans', sans-serif;opacity:0.27;">test_supply_costs_sum_correctly</div>
<div class="r" style="left:1575px;top:1258px;width:283px;height:65px;background:#fff;border:1.5px solid #bdb9b7;border-radius:6px;box-shadow:0 1px 2px rgba(0,0,0,0.06);opacity:0.27;"></div>
<div class="r" style="left:1588px;top:1275px;width:31px;height:31px;background:#cdeccf;border-radius:5px;opacity:0.27;"><svg style="position:absolute;left:0;top:0" width="31" height="31"><g transform="translate(15.5 9) scale(0.85) translate(-15.5 -9)"><g fill="none" stroke="#2b2928" stroke-width="1.3"><rect x="11" y="4" width="9" height="11" rx="1"/><rect x="13.5" y="2.5" width="4" height="2.5"/><path d="M13 10L15 12L18.5 8"/></g></g></svg><div class="t" style="left:0;top:16px;width:31px;text-align:center;font-family:'Liberation Mono', monospace;font-size:11.5px;color:#1c1a19">TST</div></div>
<div class="t " style="left:1633px;top:1277px;font-size:12px;color:#1c1a19;font-weight:normal;font-family:'Liberation Sans', sans-serif;opacity:0.27;">test_order_items_compute_to_bools</div>
<div class="t " style="left:1633px;top:1293px;font-size:12px;color:#1c1a19;font-weight:normal;font-family:'Liberation Sans', sans-serif;opacity:0.27;">_correctly</div>
<div class="r" style="left:1578px;top:1170px;width:126px;height:66px;background:#fff;border:2.5px solid #575352;border-radius:6px;box-shadow:0 6px 10px rgba(0,0,0,0.12);"></div>
<div class="r" style="left:1591px;top:1188px;width:31px;height:31px;background:#d9e8fb;border-radius:5px;"><svg style="position:absolute;left:0;top:0" width="31" height="31"><g transform="translate(15.5 9) scale(0.85) translate(-15.5 -9)"><g fill="none" stroke="#2b2928" stroke-width="1.3" stroke-linejoin="round"><path d="M15.5 3.5L21 6.5V12.5L15.5 15.5L10 12.5V6.5Z"/><path d="M10 6.5L15.5 9.5L21 6.5M15.5 9.5V15.5"/></g></g></svg><div class="t" style="left:0;top:16px;width:31px;text-align:center;font-family:'Liberation Mono', monospace;font-size:11.5px;color:#1c1a19">MDL</div></div>
<div class="t " style="left:1635px;top:1197px;font-size:12px;color:#1c1a19;font-weight:normal;font-family:'Liberation Sans', sans-serif;">customers</div>
<div class="r" style="left:1860px;top:1170px;width:126px;height:66px;background:#fff;border:1.5px solid #bdb9b7;border-radius:6px;box-shadow:0 1px 2px rgba(0,0,0,0.06);"></div>
<div class="r" style="left:1873px;top:1188px;width:31px;height:31px;background:#f3b6c3;border-radius:5px;"><svg style="position:absolute;left:0;top:0" width="31" height="31"><g transform="translate(15.5 9) scale(0.85) translate(-15.5 -9)"><g fill="none" stroke="#2b2928" stroke-width="1.3"><circle cx="11.5" cy="5" r="1.8"/><circle cx="20" cy="8" r="1.8"/><circle cx="13.5" cy="14" r="1.8"/><path d="M13 5.8L18.3 7.5M12 6.8L13 12.2M18.6 9.2L14.8 12.8"/></g></g></svg><div class="t" style="left:0;top:16px;width:31px;text-align:center;font-family:'Liberation Mono', monospace;font-size:11.5px;color:#1c1a19">SEM</div></div>
<div class="t " style="left:1917px;top:1197px;font-size:12px;color:#1c1a19;font-weight:normal;font-family:'Liberation Sans', sans-serif;">customers</div>
<div class="r" style="left:2097px;top:1114px;width:183px;height:66px;background:#fff;border:1.5px solid #bdb9b7;border-radius:6px;box-shadow:0 1px 2px rgba(0,0,0,0.06);"></div>
<div class="r" style="left:2110px;top:1132px;width:31px;height:31px;background:#fbe6a4;border-radius:5px;"><svg style="position:absolute;left:0;top:0" width="31" height="31"><g transform="translate(15.5 9) scale(0.85) translate(-15.5 -9)"><g fill="none" stroke="#2b2928" stroke-width="1.2"><path d="M10 3V15H21"/><rect x="12.5" y="10" width="2" height="5"/><rect x="15.5" y="7" width="2" height="8"/><rect x="18.5" y="4" width="2" height="11"/></g></g></svg><div class="t" style="left:0;top:16px;width:31px;text-align:center;font-family:'Liberation Mono', monospace;font-size:11.5px;color:#1c1a19">MET</div></div>
<div class="t " style="left:2154px;top:1141px;font-size:12px;color:#1c1a19;font-weight:normal;font-family:'Liberation Sans', sans-serif;">count_lifetime_orders</div>
<div class="r" style="left:2097px;top:1202px;width:185px;height:65px;background:#fff;border:1.5px solid #bdb9b7;border-radius:6px;box-shadow:0 1px 2px rgba(0,0,0,0.06);"></div>
<div class="r" style="left:2110px;top:1219px;width:31px;height:31px;background:#fbe6a4;border-radius:5px;"><svg style="position:absolute;left:0;top:0" width="31" height="31"><g transform="translate(15.5 9) scale(0.85) translate(-15.5 -9)"><g fill="none" stroke="#2b2928" stroke-width="1.2"><path d="M10 3V15H21"/><rect x="12.5" y="10" width="2" height="5"/><rect x="15.5" y="7" width="2" height="8"/><rect x="18.5" y="4" width="2" height="11"/></g></g></svg><div class="t" style="left:0;top:16px;width:31px;text-align:center;font-family:'Liberation Mono', monospace;font-size:11.5px;color:#1c1a19">MET</div></div>
<div class="t " style="left:2154px;top:1228px;font-size:12px;color:#1c1a19;font-weight:normal;font-family:'Liberation Sans', sans-serif;">lifetime_spend_pretax</div>
<div class="r" style="left:2360px;top:1230px;width:177px;height:65px;background:#fff;border:1.5px solid #bdb9b7;border-radius:6px;box-shadow:0 1px 2px rgba(0,0,0,0.06);"></div>
<div class="r" style="left:2373px;top:1247px;width:31px;height:31px;background:#fbe6a4;border-radius:5px;"><svg style="position:absolute;left:0;top:0" width="31" height="31"><g transform="translate(15.5 9) scale(0.85) translate(-15.5 -9)"><g fill="none" stroke="#2b2928" stroke-width="1.2"><path d="M10 3V15H21"/><rect x="12.5" y="10" width="2" height="5"/><rect x="15.5" y="7" width="2" height="8"/><rect x="18.5" y="4" width="2" height="11"/></g></g></svg><div class="t" style="left:0;top:16px;width:31px;text-align:center;font-family:'Liberation Mono', monospace;font-size:11.5px;color:#1c1a19">MET</div></div>
<div class="t " style="left:2417px;top:1256px;font-size:12px;color:#1c1a19;font-weight:normal;font-family:'Liberation Sans', sans-serif;">average_order_value</div>
<div class="r" style="left:2629px;top:1186px;width:197px;height:65px;background:#fff;border:1.5px solid #bdb9b7;border-radius:6px;box-shadow:0 1px 2px rgba(0,0,0,0.06);"></div>
<div class="r" style="left:2642px;top:1203px;width:31px;height:31px;background:#f5dec0;border-radius:5px;"><svg style="position:absolute;left:0;top:0" width="31" height="31"><g transform="translate(15.5 9) scale(0.85) translate(-15.5 -9)"><g fill="none" stroke="#2b2928" stroke-width="1.2"><path d="M11 4H18.5L21 6.5V15H11Z"/><path d="M13 4V7.5H18V4M13 15V11H19V15"/></g></g></svg><div class="t" style="left:0;top:16px;width:31px;text-align:center;font-family:'Liberation Mono', monospace;font-size:11.5px;color:#1c1a19">SVQ</div></div>
<div class="t " style="left:2686px;top:1212px;font-size:12px;color:#1c1a19;font-weight:normal;font-family:'Liberation Sans', sans-serif;">customer_order_metrics</div>
<div class="r" style="left:2009px;top:1151px;width:615px;height:78px;border:2px solid #8f8a88;border-radius:13px;background:rgba(255,255,255,0.82);"></div>
<div class="r" style="left:2393px;top:1152px;width:2px;height:76px;background:#8f8a88;"></div>
<div class="t " style="left:2035px;top:1175px;font-size:28px;color:#2b2928;font-weight:normal;font-family:'Liberation Sans', sans-serif;">2+customers+2</div>
<div class="t " style="left:2415px;top:1173px;font-size:29.7px;color:#2b2928;font-weight:normal;font-family:'Liberation Sans', sans-serif;-webkit-text-stroke:0.5px #2b2928;">Update Graph</div>
<div class="r" style="left:2681px;top:1151px;width:66px;height:61px;background:#fff;border:2px solid #d5d1cf;border-radius:14px;"></div>
<svg class="r" style="left:2700px;top:1167px;" width="29" height="29" viewBox="0 0 29 29"><path d="M1.5 9V1.5H9M20 1.5H27.5V9M27.5 20V27.5H20M9 27.5H1.5V20" fill="none" stroke="#1c1a19" stroke-width="2.4"/></svg>
<div class="r" style="left:2765px;top:1151px;width:66px;height:61px;background:#fff;border:2px solid #d5d1cf;border-radius:14px;"></div>
<svg class="r" style="left:2783px;top:1164px;" width="32" height="32" viewBox="0 0 32 32"><g fill="none" stroke="#1c1a19" stroke-width="2.4" stroke-linecap="round"><path d="M26 16a11 11 0 1 1 -4 -8.5"/><path d="M17.5 4L23 7.5L19.5 12.5"/></g></svg>
<div class="t " style="left:671px;top:1454px;font-size:27.8px;color:#6f6b69;font-weight:normal;font-family:'Liberation Sans', sans-serif;">Type a command, ex. dbt build --select &lt;model_name&gt;</div>
<div class="r" style="left:2083px;top:1436px;width:2px;height:72px;background:#f8f7f6;border-radius:2px;"></div>
<div class="r" style="left:2108px;top:1449px;width:79px;height:39px;border:2px solid #8f8a88;border-radius:20px;background:#fff;"></div>
<div class="r" style="left:2114px;top:1454px;width:29px;height:29px;border-radius:50%;background:#4a4544;box-shadow:1px 1px 2px rgba(0,0,0,0.15)"></div>
<div class="t " style="left:2211.5px;top:1452px;font-size:29.5px;color:#4a4544;font-weight:normal;font-family:'Liberation Sans', sans-serif;-webkit-text-stroke:0.5px #4a4544;letter-spacing:0.52px;">Defer to staging/production</div>
<svg class="r" style="left:2589px;top:1453px;" width="26" height="26" viewBox="0 0 26 26"><circle cx="13" cy="13" r="11" fill="none" stroke="#6f6b69" stroke-width="1.8"/><path d="M9.5 10a3.5 3.5 0 1 1 5 3.2c-1 .5-1.5 1.2-1.5 2.3" fill="none" stroke="#6f6b69" stroke-width="1.8"/><circle cx="13" cy="19" r="1.2" fill="#6f6b69"/></svg>
<div class="r" style="left:2638px;top:1445px;width:142px;height:48px;background:#c6f7d0;border-radius:12px;"></div>
<svg class="r" style="left:2649px;top:1454px;" width="30" height="30" viewBox="0 0 30 30"><circle cx="15" cy="15" r="13" fill="none" stroke="#1c1a19" stroke-width="2.2"/></svg>
<div class="t " style="left:2692px;top:1454px;font-size:26px;color:#1c1a19;font-weight:normal;font-family:'Liberation Sans', sans-serif;-webkit-text-stroke:0.5px #1c1a19;">Ready</div>
<div class="r" style="left:2796px;top:1437px;width:67px;height:63px;border:2px solid #8f8a88;border-radius:12px;background:#fff;"></div>
<svg class="r" style="left:2814px;top:1463px;" width="32" height="10" viewBox="0 0 32 10"><g fill="#1c1a19"><circle cx="5" cy="5" r="3"/><circle cx="16" cy="5" r="3"/><circle cx="27" cy="5" r="3"/></g></svg>
<div class="r" style="left:643px;top:68px;width:1964px;height:968px;border:10px solid #e9402a;"></div>
<div class="r" style="left:2717px;top:65px;width:162px;height:92px;border:10px solid #e9402a;"></div>
<div class="r" style="left:78px;top:68px;width:575px;height:541px;border:10px solid #e9402a;"></div>
<svg class="r" style="left:1660px;top:180px;" width="40" height="44" viewBox="0 0 40 44"><path fill="#e9402a" d="M18.2 8.2 H24.2 V36 H18.2 V17.3 H11.5 V13.3 C15.5 13.3 17.6 11.8 18.2 8.2 Z"/></svg>
<div class="t " style="left:2786px;top:179.5px;font-size:40.5px;color:#e9402a;font-weight:bold;font-family:'Liberation Sans', sans-serif;">2</div>
<div class="t " style="left:352.5px;top:292px;font-size:40.5px;color:#e9402a;font-weight:bold;font-family:'Liberation Sans', sans-serif;">3</div>
<div class="r" style="left:2727px;top:80px;width:141px;height:64px;background:#1c1b1a;border-radius:12px;"></div>
<svg class="r" style="left:2745px;top:98px;" width="28" height="28" viewBox="0 0 28 28"><g fill="none" stroke="#fff" stroke-width="2.1" stroke-linejoin="round"><path d="M3 3H19L25 9V25H3Z"/><path d="M8 3V8.5H18V3M8 25V15H20V25"/></g></svg>
<div class="t " style="left:2790px;top:98px;font-size:26px;color:#ffffff;font-weight:bold;font-family:'Liberation Sans', sans-serif;">Save</div>
</div></body></html>
